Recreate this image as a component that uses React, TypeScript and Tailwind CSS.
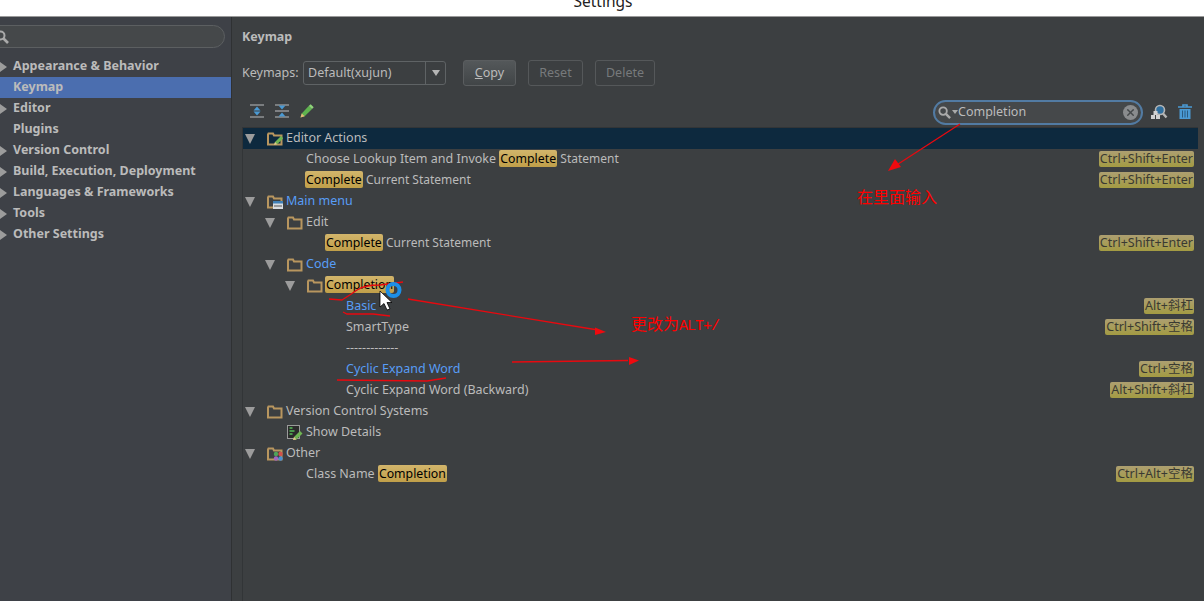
import { X } from 'lucide-react';
import type { ReactNode } from 'react';

const ui = "font-['Noto_Sans','Noto_Sans_CJK_SC',sans-serif]";

const sidebarItems = [
  { label: 'Appearance & Behavior', arrow: true },
  { label: 'Keymap', selected: true },
  { label: 'Editor', arrow: true },
  { label: 'Plugins' },
  { label: 'Version Control', arrow: true },
  { label: 'Build, Execution, Deployment', arrow: true },
  { label: 'Languages & Frameworks', arrow: true },
  { label: 'Tools', arrow: true },
  { label: 'Other Settings', arrow: true },
];

function Hl({ children, first }: { children: ReactNode; first?: boolean }) {
  return (
    <span className={`rounded-[2px] bg-gradient-to-b from-[#d2b56b] to-[#c09f49] px-px text-[12.3px] text-black ${first ? '-ml-px' : ''}`}>
      {children}
    </span>
  );
}

function Rest({ children }: { children: ReactNode }) {
  return <span className="text-[12px]">{children}</span>;
}

function Lens({ size }: { size: number }) {
  return (
    <svg width={size} height={size} viewBox="0 0 14 14" className="shrink-0">
      <circle cx="5.5" cy="5.5" r="4" fill="none" stroke="#aaaaaa" strokeWidth="2" />
      <path d="M8.5 8.5l4.5 4.5" stroke="#aaaaaa" strokeWidth="2.6" />
    </svg>
  );
}

function Folder({ badge }: { badge?: ReactNode }) {
  return (
    <svg width="16" height="14" viewBox="0 0 16 14" className="shrink-0">
      <path d="M1 2.5V12.5H14.5V3.5H7L6 1.5H1.5Z" fill="none" stroke="#b8965f" strokeWidth="2" />
      {badge}
    </svg>
  );
}

const pencilBadge = (
  <g>
    <path d="M7 13l1-3 6-6 2.2 2.2-6 6z" fill="#6fb553" />
    <path d="M7 13l1-3 2.2 2.2z" fill="#e8c48f" />
  </g>
);

const menuBadge = (
  <g>
    <rect x="6" y="6" width="10" height="8" fill="#d8dce0" />
    <rect x="6" y="6" width="10" height="2.5" fill="#3f7fb5" />
    <rect x="7" y="10.5" width="8" height="1" fill="#555" strokeDasharray="1" />
  </g>
);

const otherBadge = (
  <g>
    <circle cx="9" cy="7" r="2.2" fill="#4ea35a" />
    <circle cx="13.5" cy="7" r="2.2" fill="#d0524a" />
    <circle cx="9" cy="11.5" r="2.2" fill="#a066c0" />
    <circle cx="13.5" cy="11.5" r="2.2" fill="#4a8fd0" />
  </g>
);

function DetailsIcon() {
  return (
    <svg width="16" height="16" viewBox="0 0 16 16" className="shrink-0">
      <rect x="0.5" y="0.5" width="12" height="13" fill="#2b2b2b" stroke="#9a9a9a" />
      <path d="M2.5 3h3M2.5 6h5M2.5 9h3" stroke="#57c05a" strokeWidth="1.5" />
      <path d="M6 15l1-3 6-6 2.5 2.5-6 6z" fill="#6fb553" />
      <path d="M6 15l1-3 2.5 2.5z" fill="#e8c48f" />
    </svg>
  );
}

type Row = {
  pad: string;
  arrow?: boolean;
  icon?: ReactNode;
  text: ReactNode;
  link?: boolean;
  keys?: string;
  selected?: boolean;
};

const rows: Row[] = [
  { pad: 'pl-0', arrow: true, icon: <Folder badge={pencilBadge} />, text: 'Editor Actions', selected: true },
  { pad: 'pl-[20px]', text: <>Choose Lookup Item and Invoke <Hl>Complete</Hl> <Rest>Statement</Rest></>, keys: 'Ctrl+Shift+Enter' },
  { pad: 'pl-[20px]', text: <><Hl first>Complete</Hl> <Rest>Current Statement</Rest></>, keys: 'Ctrl+Shift+Enter' },
  { pad: 'pl-0', arrow: true, icon: <Folder badge={menuBadge} />, text: 'Main menu', link: true },
  { pad: 'pl-[20px]', arrow: true, icon: <Folder />, text: 'Edit' },
  { pad: 'pl-[40px]', text: <><Hl first>Complete</Hl> <Rest>Current Statement</Rest></>, keys: 'Ctrl+Shift+Enter' },
  { pad: 'pl-[20px]', arrow: true, icon: <Folder />, text: 'Code', link: true },
  { pad: 'pl-[40px]', arrow: true, icon: <Folder />, text: <Hl first>Completion</Hl> },
  { pad: 'pl-[60px]', text: 'Basic', link: true, keys: 'Alt+斜杠' },
  { pad: 'pl-[60px]', text: 'SmartType', keys: 'Ctrl+Shift+空格' },
  { pad: 'pl-[60px]', text: '-------------' },
  { pad: 'pl-[60px]', text: 'Cyclic Expand Word', link: true, keys: 'Ctrl+空格' },
  { pad: 'pl-[60px]', text: 'Cyclic Expand Word (Backward)', keys: 'Alt+Shift+斜杠' },
  { pad: 'pl-0', arrow: true, icon: <Folder />, text: 'Version Control Systems' },
  { pad: 'pl-[20px]', icon: <DetailsIcon />, text: 'Show Details' },
  { pad: 'pl-0', arrow: true, icon: <Folder badge={otherBadge} />, text: 'Other' },
  { pad: 'pl-[20px]', text: <>Class Name <Hl>Completion</Hl></>, keys: 'Ctrl+Alt+空格' },
];

function TreeRow({ row }: { row: Row }) {
  return (
    <div className={`flex h-[21px] items-center pr-[4px] ${row.pad} ${row.selected ? 'bg-[#0d293e]' : ''}`}>
      <div className="flex w-[24px] shrink-0 justify-start pl-[2px]">
        {row.arrow && <div className="h-0 w-0 border-x-[5.5px] border-t-[10px] border-x-transparent border-t-[#9c9c9c]" />}
      </div>
      <div className="flex w-[19px] shrink-0 items-center">{row.icon}</div>
      <div className={`whitespace-pre text-[12.5px] ${row.link ? 'text-[#589df6]' : 'text-[#bbbbbb]'}`}>{row.text}</div>
      {row.keys && (
        <div className="-mt-[2px] ml-auto flex h-[16px] items-center rounded-[2px] bg-gradient-to-b from-[#ad9f70] to-[#a39b42] px-[1px] text-[12.5px] leading-[16px] text-[#3a3a32]">
          {row.keys}
        </div>
      )}
    </div>
  );
}

function ExpandIcon({ collapse }: { collapse?: boolean }) {
  return (
    <svg width="14" height="14" viewBox="0 0 14 14">
      <path d="M0 1h14M0 13h14" stroke="#8f9294" strokeWidth="1.6" />
      {collapse ? (
        <>
          <path d="M0 6.5h14" stroke="#8f9294" strokeWidth="1.6" transform="translate(0 0.5)" />
          <path d="M3.5 1.5h7L7 5.5zM3.5 12.5h7L7 8.5z" fill="#4a9ad4" />
        </>
      ) : (
        <path d="M7 2.5l3.5 4h-7zM7 11.5l3.5-4h-7z" fill="#4a9ad4" />
      )}
    </svg>
  );
}

function ToolButton({ children, disabled, width }: { children: ReactNode; disabled?: boolean; width: string }) {
  return (
    <div
      className={`flex h-[26px] items-center justify-center rounded-[3px] border text-[12.5px] ${width} ${
        disabled
          ? 'border-[#55585a] text-[#777a7c]'
          : 'border-[#5a5d5f] bg-gradient-to-b from-[#54585a] to-[#414547] text-[#bbbbbb]'
      }`}
    >
      {children}
    </div>
  );
}

export default function App() {
  return (
    <div className={`relative flex h-[601px] w-[1204px] flex-col overflow-hidden bg-[#3c3f41] ${ui}`}>
      {/* title bar */}
      <div className="h-[17px] shrink-0 overflow-hidden border-b border-[#9a9a9a] bg-white text-center">
        <div className="-mt-[9px] pl-[2px] text-[15.5px] leading-[20px] text-[#222]">Settings</div>
      </div>

      <div className="flex min-h-0 flex-1">
        {/* sidebar */}
        <div className="w-[232px] shrink-0 border-r border-[#2f3133] bg-[#3e4147] pt-[8px]">
          <div className="-ml-[12px] flex h-[23px] w-[237px] items-center rounded-full border border-[#5c5f61] bg-[#45484a] pl-[6px]">
            <Lens size={14} />
          </div>
          <div className="mt-[8px]">
            {sidebarItems.map((it) => (
              <div
                key={it.label}
                className={`relative flex h-[21px] items-center pl-[13px] text-[12.5px] font-bold text-[#bbbbbb] ${
                  it.selected ? 'bg-[#4b6eaf]' : ''
                }`}
              >
                {it.arrow && (
                  <div className="absolute left-0 top-[6px] h-0 w-0 border-y-[5px] border-l-[7px] border-y-transparent border-l-[#9c9c9c]" />
                )}
                {it.label}
              </div>
            ))}
          </div>
        </div>

        {/* main panel */}
        <div className="flex min-w-0 flex-1 flex-col">
          <div className="pl-[10px] pt-[11px] text-[12.5px] font-bold leading-[18px] text-[#bbbbbb]">Keymap</div>

          <div className="mt-[14px] flex items-center pl-[10px]">
            <span className="w-[61px] text-[12.5px] text-[#bbbbbb]">Keymaps:</span>
            <div className="flex h-[24px] w-[143px] items-center rounded-[3px] border border-[#5f6365] bg-[#3c3f41]">
              <span className="flex-1 pl-[4px] text-[12.5px] text-[#bbbbbb]">Default(xujun)</span>
              <div className="flex h-full w-[20px] items-center justify-center border-l border-[#5f6365]">
                <div className="h-0 w-0 border-x-[4px] border-t-[6px] border-x-transparent border-t-[#b5b5b5]" />
              </div>
            </div>
            <div className="ml-[17px] flex gap-[12px]">
              <ToolButton width="w-[53px]"><span><span className="underline">C</span>opy</span></ToolButton>
              <ToolButton disabled width="w-[55px]">Reset</ToolButton>
              <ToolButton disabled width="w-[60px]">Delete</ToolButton>
            </div>
          </div>

          <div className="mt-[11px] mb-[2px] flex h-[28px] items-center pl-[18px] pr-[11px]">
            <div className="flex items-center gap-[11px]">
              <ExpandIcon />
              <ExpandIcon collapse />
              <svg width="14" height="14" viewBox="0 0 14 14">
                <path d="M0.5 13.5l1.2-4 7-7.5 3.3 3-7.3 7.3z" fill="#5fb34f" />
                <path d="M8.7 2l2-1.7 3 3-1.7 1.7z" fill="#8fd47a" />
                <path d="M0.5 13.5l1.2-4 3 2.8z" fill="#e8b878" />
              </svg>
            </div>
            <div className="ml-auto flex items-center pt-[2px]">
              <div className="flex h-[25px] w-[210px] items-center rounded-full border-2 border-[#527ba3] bg-[#45484a] pl-[3px] pr-[3px]">
                <Lens size={13} />
                <div className="ml-px h-0 w-0 border-x-[3px] border-t-[4px] border-x-transparent border-t-[#aaaaaa]" />
                <span className="flex-1 text-[12.5px] text-[#bbbbbb]">Completion</span>
                <div className="flex h-[15px] w-[15px] items-center justify-center rounded-full bg-[#8a8c8e]">
                  <X size={11} strokeWidth={3} className="text-[#45484a]" />
                </div>
              </div>
              <svg width="18" height="18" viewBox="0 0 18 18" className="ml-[7px]">
                <circle cx="10" cy="7" r="4.5" fill="#2f6f9f" stroke="#b5b5b5" strokeWidth="1.6" />
                <path d="M13 10.5l3.5 4" stroke="#b5b5b5" strokeWidth="2.4" />
                <path d="M1 12h4v4H1zM6 12h4v4H6zM3.5 8h4v4h-4z" fill="#d0d0d0" />
              </svg>
              <svg width="16" height="16" viewBox="0 0 16 16" className="ml-[9px]">
                <path d="M1 3h14M6 3V1h4v2" stroke="#4a9ad4" strokeWidth="1.6" fill="none" />
                <path d="M2.5 5h11v10h-11z" fill="#4a9ad4" />
                <path d="M5.5 6.5v7M8 6.5v7M10.5 6.5v7" stroke="#2b5b80" strokeWidth="1" />
              </svg>
            </div>
          </div>

          <div className="ml-[10px] mr-[6px] flex-1 border-l border-t border-[#323537]">
            {rows.map((row, i) => (
              <TreeRow key={i} row={row} />
            ))}
          </div>
        </div>
      </div>

      {/* red annotations drawn on the screenshot */}
      <svg width="1204" height="601" className="pointer-events-none absolute left-0 top-0">
        <g fill="none" stroke="#e8090f" strokeWidth="1.3">
          <path d="M960 124L892 168" />
          <path d="M408 299L598 330" />
          <path d="M512 362L628 360.5" />
          <path d="M329 299L342 300Q350 295 357 290T380 285L403 282" />
          <path d="M343 312L347 314H373L390 316" />
          <path d="M337 380L427 381L446 378" />
        </g>
        <g fill="#f00a0f">
          <path d="M888 171L895 159L901 167Z" />
          <path d="M606 332L595 327.5L595 335Z" />
          <path d="M639 360.5L629 357L629 365Z" />
        </g>
        <circle cx="393.5" cy="290" r="6" fill="none" stroke="#1d8fe6" strokeWidth="4" />
        <path d="M380 291V307L384 303.5L387 310L390 309L387 302.5H392Z" fill="#fff" stroke="#000" strokeWidth="0.8" />
      </svg>
      <div className="absolute left-[857px] top-[187px] text-[16px] leading-[20px] text-[#ff0000]">在里面输入</div>
      <div className="absolute left-[631px] top-[314px] text-[16px] leading-[20px] text-[#ff0000]">
        更改为<span className="font-['Liberation_Mono',monospace] text-[15px] tracking-[-1px]">ALT+/</span>
      </div>
    </div>
  );
}
